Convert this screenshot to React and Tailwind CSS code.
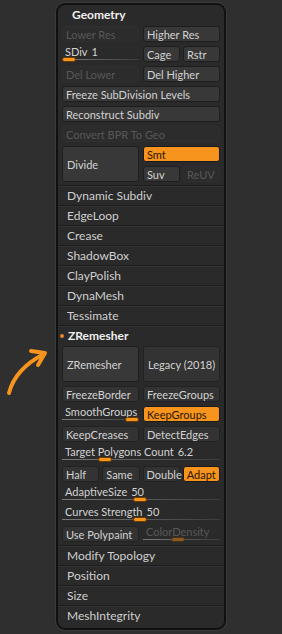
import clsx from "clsx";

const ORANGE = "#f7941d";

function Btn({ children, tone = "normal", className }) {
  return (
    <div
      className={clsx(
        "flex items-center rounded-[3px] border px-[3px] text-[11px] leading-none whitespace-nowrap",
        tone === "normal" && "border-[#1e1e1e] bg-[#383838] text-[#d2d2d2]",
        tone === "flat" && "border-[#222222] bg-[#333333] text-[#d2d2d2]",
        tone === "off" && "border-[#2f2f2f] bg-[#2c2c2c] text-[#585858]",
        tone === "on" && "border-[#1a1a1a] bg-[#f7941d] text-[#2a1400]",
        className
      )}
    >
      {children}
    </div>
  );
}

function Slider({ label, value, pos, off, className }) {
  return (
    <div className={clsx("flex h-[16px] flex-col", className)}>
      <div
        className={clsx(
          "flex h-[12px] items-center gap-[4px] px-[3px] text-[11px] leading-none whitespace-nowrap",
          off ? "text-[#585858]" : "text-[#d2d2d2]"
        )}
      >
        <span>{label}</span>
        {value && <span>{value}</span>}
      </div>
      <div className="relative h-[5px]">
        <div className="absolute inset-x-0 top-[2px] h-px bg-gradient-to-r from-[#7a7a7a] to-[#3c3c3c]" />
        <div
          className={clsx(
            "absolute top-0 h-[5px] w-[14px] rounded-full border",
            off ? "border-[#4a3015] bg-[#8a5a26]" : "border-[#6b3a00] bg-[#f7941d]"
          )}
          style={{ left: `calc((100% - 14px) * ${pos})` }}
        />
      </div>
    </div>
  );
}

function Row({ children, bold, dot }) {
  return (
    <div className="flex h-[20px] items-center border-t border-[#1c1c1c] pl-[9px] shadow-[inset_0_1px_0_#343434]">
      {dot && <span className="-ml-[7px] mr-[4px] h-[4px] w-[4px] rounded-full bg-[#e8852a]" />}
      <span
        className={clsx(
          "text-[12px] leading-none",
          bold ? "font-bold text-[#eeeeee]" : "text-[#cfcfcf]"
        )}
      >
        {children}
      </span>
    </div>
  );
}

export default function App() {
  return (
    <div className="relative h-[634px] w-[282px] overflow-hidden bg-[#2f2f2f] font-['Lato',sans-serif]">
      <svg
        className="absolute left-0 top-[340px]"
        width="56"
        height="60"
        viewBox="0 340 56 60"
        fill="none"
        stroke={ORANGE}
        strokeWidth="4"
        strokeLinecap="round"
        strokeLinejoin="round"
      >
        <path d="M9 393 Q15 369 44 354" />
        <path d="M31 351 L45 353 L38 365" />
      </svg>

      <div className="ml-[56px] w-[170px] pt-[3px]">
        <div className="h-[627px] rounded-[9px] border-2 border-[#111111] bg-[#2a2a2a] shadow-[0_0_0_1px_#3a3a3a]">
          <div className="flex h-[20px] items-center pl-[14px] text-[12px] font-bold text-[#efefef]">
            Geometry
          </div>

          <div className="mt-[1px] flex flex-col gap-[4px] px-[4px]">
            <div className="grid h-[16px] grid-cols-2 gap-[4px]">
              <Btn tone="off">Lower Res</Btn>
              <Btn>Higher Res</Btn>
            </div>
            <div className="grid h-[16px] grid-cols-2 gap-[4px]">
              <Slider label="SDiv" value="1" pos={0} />
              <div className="grid grid-cols-2 gap-[3px]">
                <Btn>Cage</Btn>
                <Btn>Rstr</Btn>
              </div>
            </div>
            <div className="grid h-[16px] grid-cols-2 gap-[4px]">
              <Btn tone="off">Del Lower</Btn>
              <Btn>Del Higher</Btn>
            </div>
            <Btn className="h-[16px]">Freeze SubDivision Levels</Btn>
            <Btn className="h-[16px]">Reconstruct Subdiv</Btn>
            <Btn tone="off" className="h-[16px]">Convert BPR To Geo</Btn>
            <div className="grid h-[36px] grid-cols-2 gap-[4px]">
              <Btn className="pl-[4px]">Divide</Btn>
              <div className="flex flex-col gap-[4px]">
                <Btn tone="on" className="h-[16px]">Smt</Btn>
                <div className="grid h-[16px] grid-cols-2 gap-[3px]">
                  <Btn>Suv</Btn>
                  <Btn tone="off">ReUV</Btn>
                </div>
              </div>
            </div>
          </div>

          <div className="mt-[3px]">
            <Row>Dynamic Subdiv</Row>
            <Row>EdgeLoop</Row>
            <Row>Crease</Row>
            <Row>ShadowBox</Row>
            <Row>ClayPolish</Row>
            <Row>DynaMesh</Row>
            <Row>Tessimate</Row>
            <Row bold dot>ZRemesher</Row>
          </div>

          <div className="mt-[1px] flex flex-col gap-[4px] px-[4px]">
            <div className="grid h-[36px] grid-cols-2 gap-[4px]">
              <Btn className="bg-[#3d3d3d] pl-[4px]">ZRemesher</Btn>
              <Btn tone="flat" className="pl-[4px]">Legacy (2018)</Btn>
            </div>
            <div className="grid h-[16px] grid-cols-2 gap-[4px]">
              <Btn tone="flat">FreezeBorder</Btn>
              <Btn tone="flat">FreezeGroups</Btn>
            </div>
            <div className="grid h-[16px] grid-cols-2 gap-[4px]">
              <Slider label="SmoothGroups" pos={1} />
              <Btn tone="on">KeepGroups</Btn>
            </div>
            <div className="grid h-[16px] grid-cols-2 gap-[4px]">
              <Btn tone="flat">KeepCreases</Btn>
              <Btn tone="flat">DetectEdges</Btn>
            </div>
            <Slider label="Target Polygons Count" value="6.2" pos={0.25} />
            <div className="grid h-[16px] grid-cols-4 gap-[3px]">
              <Btn tone="flat">Half</Btn>
              <Btn tone="flat">Same</Btn>
              <Btn tone="flat">Double</Btn>
              <Btn tone="on">Adapt</Btn>
            </div>
            <Slider label="AdaptiveSize" value="50" pos={0.49} />
            <Slider label="Curves Strength" value="50" pos={0.49} />
            <div className="grid h-[16px] grid-cols-2 gap-[4px]">
              <Btn tone="flat">Use Polypaint</Btn>
              <Slider label="ColorDensity" pos={0.45} off />
            </div>
          </div>

          <div className="mt-[3px]">
            <Row>Modify Topology</Row>
            <Row>Position</Row>
            <Row>Size</Row>
            <Row>MeshIntegrity</Row>
          </div>
        </div>
      </div>
    </div>
  );
}
